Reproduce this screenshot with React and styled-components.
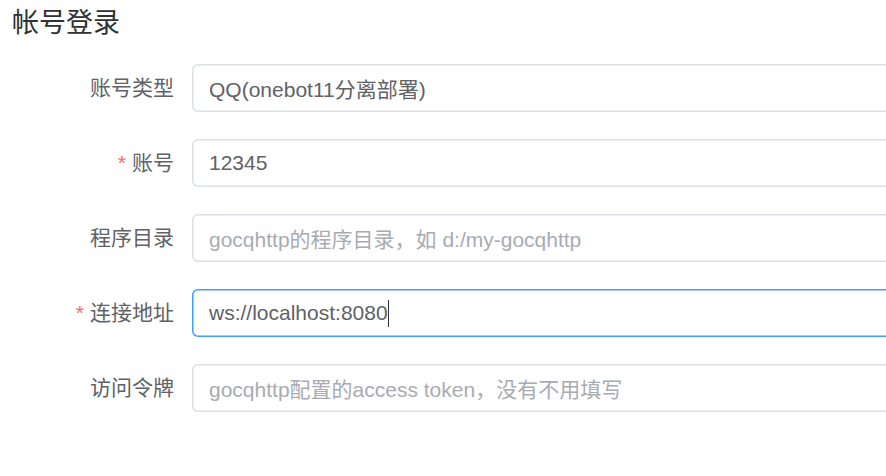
import React from "react";
import styled, { createGlobalStyle } from "styled-components";

const Global = createGlobalStyle`
  html, body { margin: 0; padding: 0; background: #fff; overflow: hidden; }
  body {
    font-family: "Liberation Sans", Arial, "Noto Sans CJK SC", sans-serif;
    -webkit-font-smoothing: antialiased;
  }
`;

const Page = styled.div`
  padding: 0 0 0 12px;
  width: 874px;
  overflow: hidden;
`;

const Title = styled.h3`
  margin: 0;
  height: 46px;
  line-height: 46px;
  font-size: 27px;
  font-weight: 400;
  color: #303133;
`;

const Form = styled.form`
  margin-top: 18px;
  display: flex;
  flex-direction: column;
  gap: 27px;
`;

const Row = styled.div`
  display: flex;
  align-items: center;
`;

const Label = styled.label`
  width: 180px;
  flex: none;
  box-sizing: border-box;
  padding-right: 18px;
  text-align: right;
  font-size: 21px;
  line-height: 48px;
  color: #606266;
  &::before {
    content: ${(p) => (p.$required ? '"*"' : "none")};
    color: #f56c6c;
    margin-right: 6px;
  }
`;

const Field = styled.div`
  flex: none;
  width: 720px;
  height: 48px;
  box-sizing: border-box;
  padding: 0 16.5px 0 17px;
  border-radius: 6px;
  background: #fff;
  box-shadow: 0 0 0 1.5px ${(p) => (p.$focused ? "#409eff" : "#dcdfe6")} inset;
  display: flex;
  align-items: center;
  font-size: 21px;
`;

const Value = styled.span`
  color: #606266;
  white-space: nowrap;
`;

const Placeholder = styled.span`
  color: #a8abb2;
  white-space: nowrap;
`;

const Caret = styled.span`
  display: inline-block;
  width: 1px;
  height: 27px;
  background: #303133;
`;

const fields = [
  { label: "账号类型", value: "QQ(onebot11分离部署)" },
  { label: "账号", value: "12345", required: true },
  { label: "程序目录", placeholder: "gocqhttp的程序目录，如 d:/my-gocqhttp" },
  { label: "连接地址", value: "ws://localhost:8080", required: true, focused: true },
  { label: "访问令牌", placeholder: "gocqhttp配置的access token，没有不用填写" },
];

export default function App() {
  return (
    <>
      <Global />
      <Page>
        <Title>帐号登录</Title>
        <Form>
          {fields.map((f) => (
            <Row key={f.label}>
              <Label $required={f.required}>{f.label}</Label>
              <Field $focused={f.focused}>
                {f.value ? <Value>{f.value}</Value> : <Placeholder>{f.placeholder}</Placeholder>}
                {f.focused && <Caret />}
              </Field>
            </Row>
          ))}
        </Form>
      </Page>
    </>
  );
}
